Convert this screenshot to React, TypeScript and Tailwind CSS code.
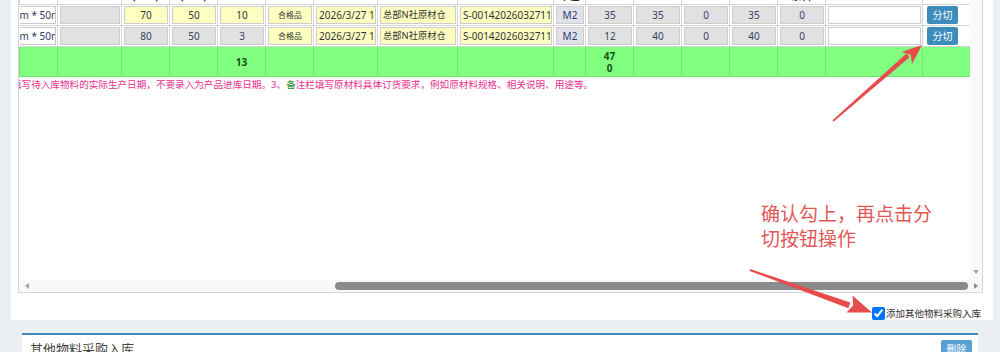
import React from 'react';

type Cell =
  | { kind: 'lead'; text: string }
  | { kind: 'gray' | 'navy' | 'yellow' | 'white'; text: string; align?: 'left' | 'center'; size?: string }
  | { kind: 'button'; text: string };

const COLS = [38, 64, 48, 48, 48, 48, 64, 80, 96, 32, 48, 48, 48, 48, 48, 97, 48];

const HEAD = ['', '', '宽度\n(mm)', '长度\n(mm)', '', '', '', '', '', '单位', '', '', '', '', '余料', '', ''];

const makeRow = (a: string, b: string, c: string, gray3: boolean, q: string, w: string): Cell[] => [
  { kind: 'lead', text: 'm * 50mm' },
  { kind: 'gray', text: '' },
  { kind: gray3 ? 'gray' : 'yellow', text: a },
  { kind: gray3 ? 'gray' : 'yellow', text: b },
  { kind: gray3 ? 'gray' : 'yellow', text: c },
  { kind: 'yellow', text: '合格品', size: 'text-[8px]' },
  { kind: 'yellow', text: '2026/3/27 1', align: 'left' },
  { kind: 'yellow', text: '总部N社原材仓', align: 'left', size: 'text-[9.3px]' },
  { kind: 'yellow', text: 'S-00142026032711', align: 'left' },
  { kind: 'navy', text: 'M2' },
  { kind: 'gray', text: q },
  { kind: 'gray', text: w },
  { kind: 'gray', text: '0' },
  { kind: 'gray', text: w },
  { kind: 'gray', text: '0' },
  { kind: 'white', text: '' },
  { kind: 'button', text: '分切' },
];

const ROWS: Cell[][] = [makeRow('70', '50', '10', false, '35', '35'), makeRow('80', '50', '3', true, '12', '40')];

const boxTone = {
  gray: 'bg-[#e1e1e1] text-[#3b4060]',
  navy: 'bg-[#e1e1ea] text-[#2d3a6e]',
  yellow: 'bg-[#ffffc2] text-[#333]',
  white: 'bg-white text-[#333]',
};

function CellBox({ cell }: { cell: Cell }) {
  if (cell.kind === 'button') {
    return (
      <div className="ml-[2px] flex h-[18px] w-[31px] items-center justify-center rounded-[2px] bg-[#3c8dbc] text-[10px] text-white">
        {cell.text}
      </div>
    );
  }
  if (cell.kind === 'lead') {
    return (
      <div className="flex h-[18px] items-center overflow-hidden whitespace-nowrap border-y border-r border-[#c9c9c9] bg-white text-[10px] text-[#333a66]">
        {cell.text}
      </div>
    );
  }
  const left = cell.align === 'left';
  return (
    <div
      className={`flex h-[18px] items-center overflow-hidden whitespace-nowrap border border-[#cdcdcd] ${boxTone[cell.kind]} ${
        left ? 'justify-start pl-[2px]' : 'justify-center'
      } ${cell.size ?? 'text-[10px]'}`}
    >
      {cell.text}
    </div>
  );
}

function Arrows() {
  return (
    <svg className="pointer-events-none absolute inset-0" width="1000" height="352" viewBox="0 0 1000 352">
      <g fill="#e84b4b">
        <polygon points="832.5,120.2 833.5,121.8 909.6,57.3 906.4,53.5" />
        <polygon points="922,45 901.6,51.9 910.6,54.8 912,64.1" />
        <polygon points="749.6,270.9 750.4,269.1 850.3,302.6 848.4,308.2" />
        <polygon points="872,312.5 852.4,295.5 853.2,305.4 846.4,312.5" />
      </g>
    </svg>
  );
}

export default function App() {
  return (
    <div className="relative h-[352px] w-[1000px] overflow-hidden bg-[#ecf0f5] font-['Noto_Sans','Noto_Sans_CJK_SC',sans-serif]">
      {/* upper white box holding the scrolled grid */}
      <div className="ml-[11px] flex h-[320px] w-[982px] flex-col bg-white pl-[7px] pr-[10px]">
        <div className="flex h-[293px] flex-col border-x border-b border-[#d2d6de]">
          <div className="flex min-h-0 flex-1">
            <div className="min-w-0 flex-1 overflow-hidden">
              <table className="mt-[-27px] table-fixed border-collapse" style={{ width: 951 }}>
                <colgroup>
                  {COLS.map((w, i) => (
                    <col key={i} style={{ width: w }} />
                  ))}
                </colgroup>
                <tbody>
                  <tr className="h-[30px]">
                    {HEAD.map((h, i) => (
                      <td
                        key={i}
                        className="whitespace-pre border border-[#d6d6d6] p-0 text-center align-bottom text-[10px] leading-[15px] font-bold text-[#333]"
                      >
                        {h}
                      </td>
                    ))}
                  </tr>
                  {ROWS.map((row, r) => (
                    <tr key={r}>
                      {row.map((cell, i) => (
                        <td
                          key={i}
                          className={`border border-[#d6d6d6] py-[1px] ${i === 0 ? 'border-l-0 pl-0 pr-[1px]' : 'pl-[2px] pr-[1px]'}`}
                        >
                          <CellBox cell={cell} />
                        </td>
                      ))}
                    </tr>
                  ))}
                  <tr className="h-[30px] bg-[#80ff80]">
                    {COLS.map((_, i) => (
                      <td
                        key={i}
                        className="border border-[#6fe66f] p-0 text-center align-middle text-[10px] leading-[12px] font-bold text-[#145214]"
                      >
                        {i === 4 && '13'}
                        {i === 10 && (
                          <div className="flex flex-col">
                            <span>47</span>
                            <span>0</span>
                          </div>
                        )}
                      </td>
                    ))}
                  </tr>
                </tbody>
              </table>
              <div className="ml-[-7px] mt-[1px] whitespace-nowrap text-[9.6px] leading-[14px] text-[#e6338f]">
                填写待入库物料的实际生产日期，不要录入为产品进库日期。3、<span className="text-[#2e8b2e]">备</span>
                注栏填写原材料具体订货要求，例如原材料规格、相关说明、用途等。
              </div>
            </div>
            {/* vertical scrollbar */}
            <div className="flex w-[12px] flex-col items-center justify-end bg-[#fafafa] pb-[6px]">
              <div className="h-0 w-0 border-x-[3px] border-t-[4px] border-x-transparent border-t-[#a3a3a3]" />
            </div>
          </div>
          {/* horizontal scrollbar */}
          <div className="flex h-[12px] items-center bg-[#f8f8f8] pl-[6px]">
            <div className="h-0 w-0 border-y-[3px] border-r-[4px] border-y-transparent border-r-[#a3a3a3]" />
            <div className="ml-[306px] h-[8px] w-[633px] rounded-full bg-[#8b8b8b]" />
            <div className="ml-[6px] h-0 w-0 border-y-[3px] border-l-[4px] border-y-transparent border-l-[#8b8b8b]" />
          </div>
        </div>
        <div className="flex flex-1 items-end justify-end pr-[2px]">
          <label className="flex items-center text-[9.5px] leading-[13px] text-[#333]">
            <input type="checkbox" defaultChecked className="m-0 mr-[1px] h-[13px] w-[13px]" />
            添加其他物料采购入库
          </label>
        </div>
      </div>

      {/* lower panel */}
      <div className="ml-[22px] mt-[13px] flex w-[956px] items-start justify-between border-t-2 border-[#3c8dbc] bg-white pl-[8px] pr-[6px] pt-[5px]">
        <div className="text-[13px] leading-[18px] text-[#444]">其他物料采购入库</div>
        <button className="flex h-[18px] w-[31px] items-center justify-center rounded-[2px] bg-[#5a9fd4] text-[10px] text-white">
          删除
        </button>
      </div>

      <Arrows />
      <div className="absolute left-[761px] top-[202px] text-[19px] leading-[25px] text-[#e25656]">
        确认勾上，再点击分
        <br />
        切按钮操作
      </div>
    </div>
  );
}
